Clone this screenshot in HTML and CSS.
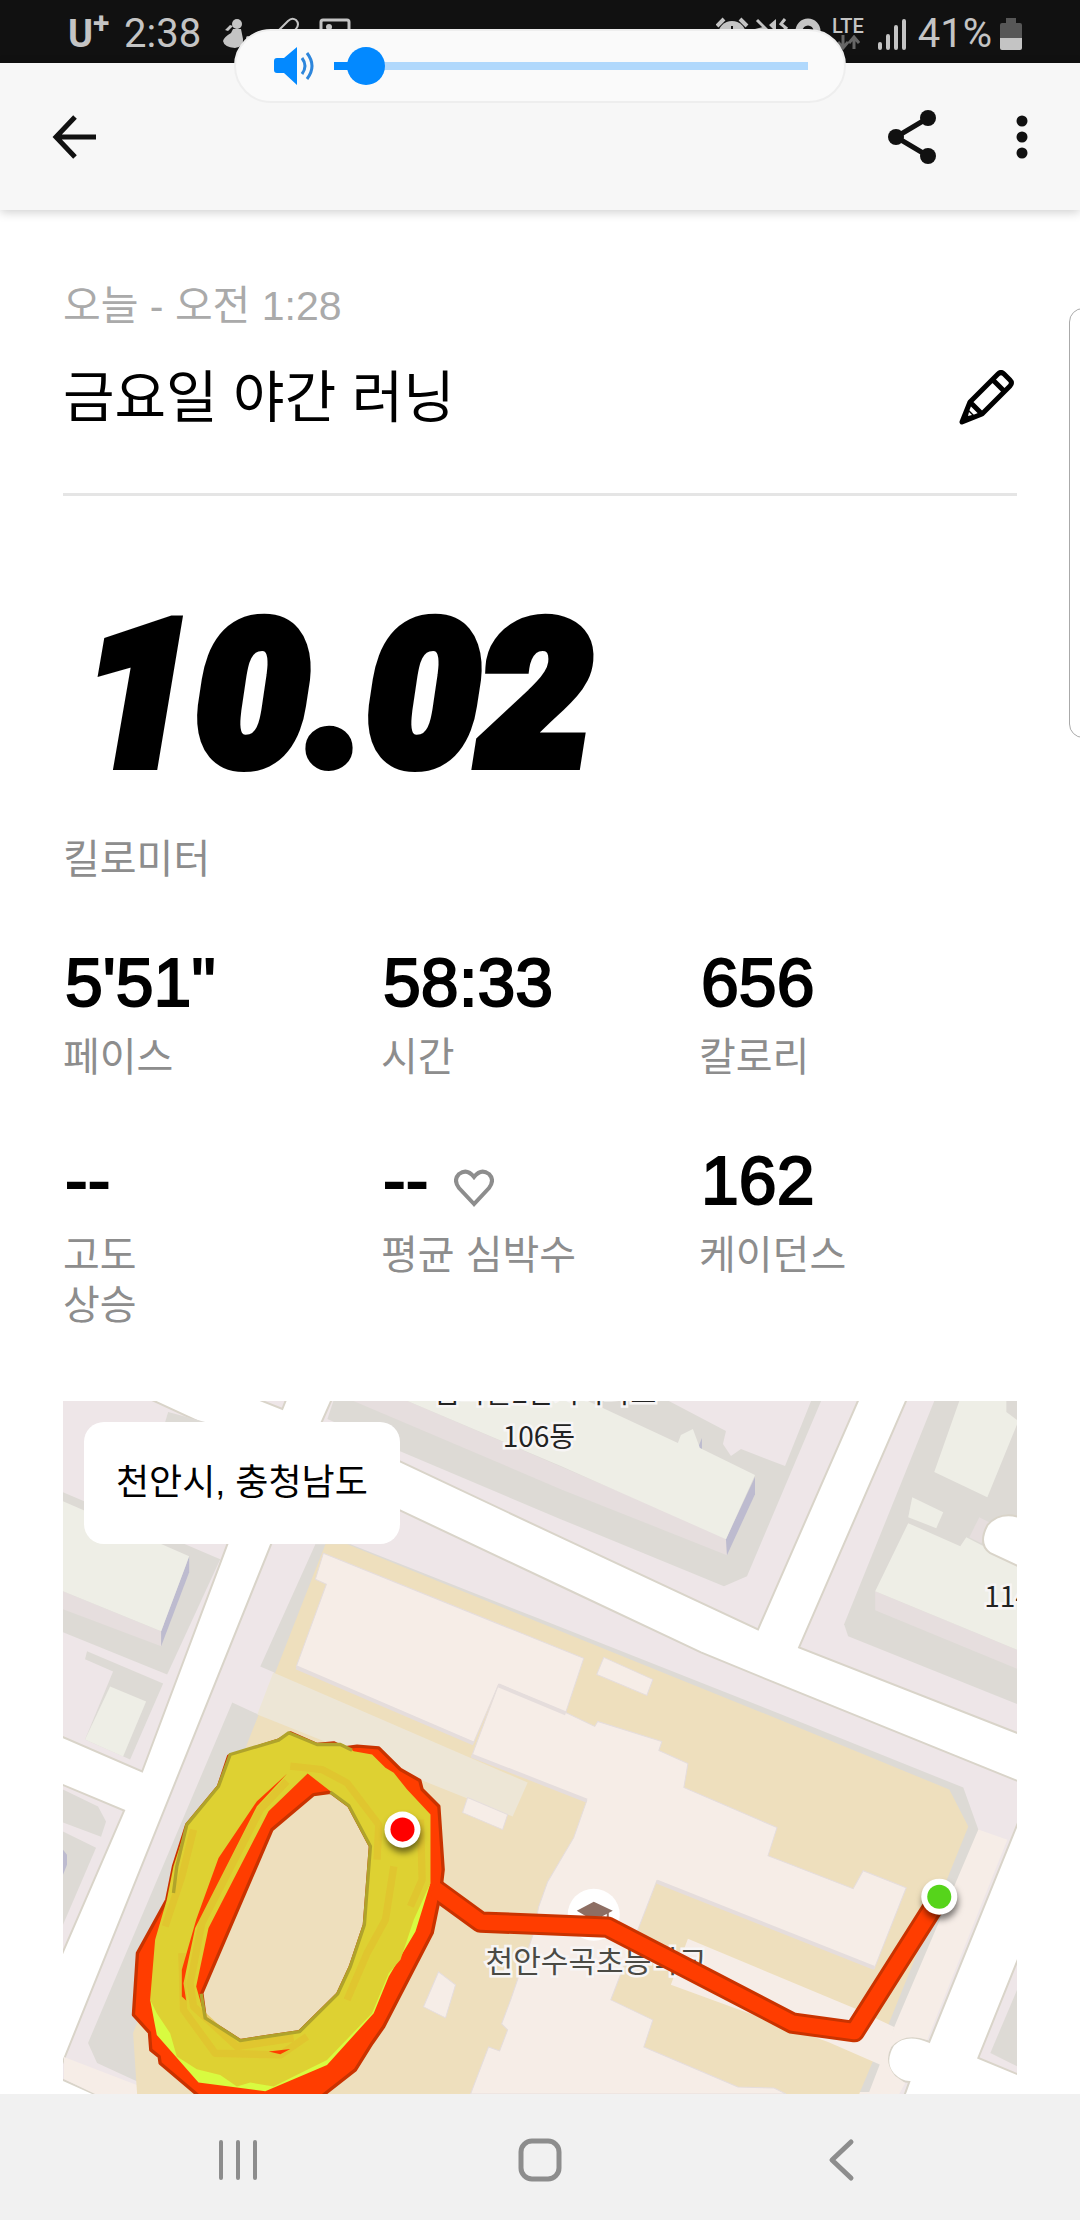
FILE: index.html
```html
<!DOCTYPE html>
<html lang="ko">
<head>
  <meta charset="UTF-8">
  <meta name="viewport" content="width=device-width, initial-scale=1.0">
  <title>금요일 야간 러닝</title>
  <link rel="stylesheet" href="styles.css">
</head>
<body>
  <div class="status-bar">
    <div class="status-group">
      <span class="carrier">U<sup>+</sup></span>
      <span class="clock">2:38</span>
      <svg class="notif-icons" viewBox="0 0 130 34" width="130" height="34" aria-hidden="true">
        <circle cx="15" cy="7" r="5" fill="#c4c4c4"/>
        <path d="M11 12h8l2 10q1 8-8 9Q2 30 1 24q1-4 8-8zM3 13l5-5 3 1-5 5z" fill="#c4c4c4"/>
        <circle cx="26" cy="21" r="2" fill="#c4c4c4"/>
        <path d="M55 15 66 4q4-4 8-1 4 4 0 9L60 26" fill="none" stroke="#c4c4c4" stroke-width="2"/>
        <rect x="99" y="3" width="28" height="26" rx="2" fill="none" stroke="#c4c4c4" stroke-width="3"/>
        <circle cx="107" cy="10" r="3" fill="#c4c4c4"/>
      </svg>
    </div>
    <div class="status-group">
      <svg class="system-icons" viewBox="0 0 108 34" width="108" height="34" aria-hidden="true">
        <path d="M1 9l7-7M31 9l-7-7" stroke="#c4c4c4" stroke-width="4"/>
        <circle cx="16" cy="18" r="14" fill="#c4c4c4"/>
        <path d="M16 9v9h6" fill="none" stroke="#111" stroke-width="2"/>
        <path d="M41 3l20 20" stroke="#c4c4c4" stroke-width="3"/>
        <path d="M53 8l7-6v13zM39 12l8-2 8 10H39z" fill="#c4c4c4"/>
        <path d="M69 2l-4 5 5 4-4 5" fill="none" stroke="#c4c4c4" stroke-width="3"/>
        <circle cx="92" cy="14" r="9" fill="none" stroke="#c4c4c4" stroke-width="7"/>
      </svg>
      <span class="network">LTE
        <svg viewBox="0 0 24 15" width="24" height="15" aria-hidden="true">
          <path d="M7 0v11M2 7l5 6 5-6M18 14V3M13 8l5-6 5 6" fill="none" stroke="#666" stroke-width="3"/>
        </svg>
      </span>
      <svg class="signal" viewBox="0 0 28 32" width="28" height="32" aria-hidden="true">
        <path d="M2 26v4M10 18v12M18 9v21M26 3v27" stroke="#c4c4c4" stroke-width="4" stroke-linecap="round"/>
      </svg>
      <span class="percent">41%</span>
      <svg class="battery" viewBox="0 0 22 34" width="22" height="34" aria-hidden="true">
        <path d="M6 1h10v5h4q2 0 2 2v14H0V8q0-2 2-2h4z" fill="#575757"/>
        <path d="M0 21h22v10q0 2-2 2H2q-2 0-2-2z" fill="#c4c4c4"/>
      </svg>
    </div>
  </div>

  <div class="volume-panel">
    <svg viewBox="0 0 40 38" width="40" height="38" aria-hidden="true">
      <path d="M3 11h7L23 0v38L10 26H3q-3 0-3-3v-9q0-3 3-3z" fill="#0389ff"/>
      <path d="M28 11q6 8 0 16M33 6q10 13 0 26" fill="none" stroke="#2d86dc" stroke-width="3"/>
    </svg>
    <input class="volume" type="range" min="0" max="100" value="3" aria-label="볼륨">
  </div>

  <header class="app-bar">
    <button class="icon-btn" aria-label="뒤로">
      <svg viewBox="0 0 44 44" width="44" height="44">
        <path d="M23 2 4 22l19 20M4 22h40" fill="none" stroke="#111" stroke-width="5"/>
      </svg>
    </button>
    <div class="app-actions">
      <button class="icon-btn" aria-label="공유">
        <svg viewBox="0 0 48 54" width="48" height="54">
          <path d="M40 8 8 27l32 19" fill="none" stroke="#111" stroke-width="5"/>
          <circle cx="40" cy="8" r="8" fill="#111"/>
          <circle cx="8" cy="27" r="8" fill="#111"/>
          <circle cx="40" cy="46" r="8" fill="#111"/>
        </svg>
      </button>
      <button class="icon-btn" aria-label="더보기">
        <svg viewBox="0 0 12 44" width="12" height="44">
          <circle cx="6" cy="6" r="5.5" fill="#111"/>
          <circle cx="6" cy="22" r="5.5" fill="#111"/>
          <circle cx="6" cy="38" r="5.5" fill="#111"/>
        </svg>
      </button>
    </div>
  </header>

  <main class="run">
    <p class="run-date">오늘 - 오전 1:28</p>
    <div class="run-title">
      <h1>금요일 야간 러닝</h1>
      <button class="icon-btn" aria-label="제목 수정">
        <svg viewBox="0 0 58 56" width="58" height="56">
          <path d="M3 52 11 32 39 4q3-3 6 0l6 6q3 3 0 6L23 44zM11 32l12 12M34 10l11 11" fill="none" stroke="#000" stroke-width="5" stroke-linejoin="round"/>
          <path d="M2 54 8 38l9 9z" fill="#000"/>
          <path d="M9 46l1-4 3 3z" fill="#fff"/>
        </svg>
      </button>
    </div>

    <div class="distance">10.02</div>
    <div class="label">킬로미터</div>

    <div class="stats">
      <div class="stat">
        <div class="value">5'51"</div>
        <div class="label">페이스</div>
      </div>
      <div class="stat">
        <div class="value">58:33</div>
        <div class="label">시간</div>
      </div>
      <div class="stat">
        <div class="value">656</div>
        <div class="label">칼로리</div>
      </div>
      <div class="stat">
        <div class="value">--</div>
        <div class="label">고도<br>상승</div>
      </div>
      <div class="stat">
        <div class="value">--
          <svg class="heart" viewBox="0 0 40 38" width="40" height="38" aria-hidden="true">
            <path d="M20 35 5 19Q-1 11 5 5q8-6 15 3 7-9 15-3 6 6 0 14z" fill="none" stroke="#8d8d8d" stroke-width="4"/>
          </svg>
        </div>
        <div class="label">평균 심박수</div>
      </div>
      <div class="stat">
        <div class="value">162</div>
        <div class="label">케이던스</div>
      </div>
    </div>

    <div class="map">
      <svg class="map-canvas" viewBox="63 1402 954 692" preserveAspectRatio="xMinYMin slice" role="img" aria-label="러닝 경로 지도">
        <rect x="63" y="1402" width="954" height="692" fill="#fff"/>

        <!-- city blocks -->
        <g class="block">
          <path d="M50 1390H128L262 1452 142 1772 50 1732z"/>
          <path d="M232 1390 282 1410 290 1390z"/>
          <path d="M336 1390 320 1426 399 1462 560 1538 757 1630 862 1390z"/>
          <path d="M910 1390 798 1648 1030 1739V1390z"/>
          <path d="M50 1780 124 1811 50 1982z"/>
          <path d="M303 1465 399 1511 560 1587 700 1653 773 1683 1030 1787V1790L928 2042Q905 2032 892 2045 882 2062 892 2074 900 2082 908 2082L898 2110H130L50 2074V2094z"/>
          <path d="M1030 1926 977 2058 1030 2080z"/>
        </g>

        <!-- apartments -->
        <g class="ground">
          <path d="M63 1493 220 1560 167 1675 63 1633z"/>
          <path d="M168 1413 205 1423 205 1440 160 1440z"/>
          <path d="M87 1652 163 1684 130 1760 121 1756 85 1740 113 1672 85 1660z"/>
          <path d="M63 1790 98 1807 106 1822 101 1837 63 1823z"/>
          <path d="M63 1832 96 1848 63 1925z"/>
          <path d="M333 1402 327 1420 399 1452 560 1520 723 1587 746 1577 820 1402H810L784 1467 740 1450 730 1457 722 1445 725 1432 668 1402z"/>
          <path d="M933 1402 843 1625 847 1637 1017 1705V1402z"/>
          <path d="M1017 1987 989 2053 1017 2067z"/>
        </g>
        <g class="wall">
          <path d="M63 1592 161 1632V1647L63 1610z"/>
          <path d="M353 1402 560 1490 726 1556 725 1538 407 1402z"/>
          <path d="M874 1592 1017 1651V1670L874 1611z"/>
          <path d="M978 1518 968 1538 980 1544 990 1524z"/>
        </g>
        <g class="shade">
          <path d="M189 1557V1573L161 1647V1632z"/>
          <path d="M725 1540 754 1478V1495L726 1556z"/>
          <path d="M63 1850 67 1855V1865L63 1875z"/>
          <path d="M701 1439 697 1449 701 1450z"/>
        </g>
        <g class="roof">
          <path d="M63 1502 189 1557 161 1632 63 1592z"/>
          <path d="M110 1687 146 1702 123 1757 85 1740z"/>
          <path d="M407 1402 560 1467 725 1540 754 1476 699 1449 692 1430 680 1436 677 1444 587 1402z"/>
          <path d="M958 1402 933 1473 986 1498 1017 1422 1005 1413V1402z"/>
          <path d="M911 1498 942 1513 935 1529 907 1518z"/>
          <path d="M907 1524 959 1547 965 1538 1017 1565V1651L874 1592z"/>
        </g>
        <path d="M1030 1523Q1002 1508 986 1526 976 1545 989 1554L1030 1573z" fill="#fff" stroke="#d9d4c9" stroke-width="2"/>

        <!-- school ground -->
        <path d="M977 1830 1006 1840 926 2040Q903 2032 890 2047 882 2062 894 2076L904 2083 898 2094H850L860 2040z" fill="#f6ede7"/>
        <path d="M64 2057 160 2094H95L64 2079z" fill="#f6ede7"/>
        <path d="M315 1545 260 1667 274 1673 258 1715 232 1703 88 2043 97 2063 160 2092H868L893 2027 977 1830 962 1788 793 1720 540 1620 350 1545z" fill="#dddad5"/>
        <path d="M325 1545 275 1673 133 2033 137 2094H858L887 2025 967 1827 948 1790 778 1720 560 1632 347 1545z" fill="#eedfbd"/>
        <path d="M273 1673 527 1783 512 1817 257 1715z" fill="#ede6d6"/>
        <path d="M687 1939 855 2009 893 2027 882 2066 827 2042 670 1985z" fill="#f6ede7"/>
        <g class="school">
          <path d="M323 1554 583 1659 565 1713 498 1685 473 1743 296 1667 326 1585 315 1580z"/>
          <path d="M603 1658 652 1680 646 1696 596 1675z"/>
          <path d="M498 1685 565 1713 594 1727 597 1722 661 1742 658 1751 687 1764 683 1788 776 1828 767 1856 852 1889 862 1871 905 1888 873 1969 656 1881 610 2000 652 2020 643 2047 737 2087 773 2088 785 2094H470L488 2047 499 2051 507 2030 501 2024 510 2000 533 1933 538 1907 547 1882 573 1838 586 1801 471 1757z"/>
          <path d="M467 1798 507 1815 502 1830 462 1813z"/>
          <path d="M438 1972 455 1985 445 2018 423 2007z"/>
        </g>
        <path d="M296 1668 473 1744M498 1686 565 1714M471 1756 586 1801M656 1882 873 1968" fill="none" stroke="#e5dddc" stroke-width="4"/>

        <!-- place names -->
        <circle cx="593" cy="1915" r="26" fill="#fff"/>
        <path d="M576 1911 593 1902 612 1911 593 1921zM583 1917v8h21v-8z" fill="#8d6e63"/>
        <path d="M607 1912v12" stroke="#8d6e63" stroke-width="2"/>
        <g class="map-text">
          <text x="434" y="1404">꿈마을2단지아파트</text>
          <text x="502" y="1448">106동</text>
          <text x="983" y="1608">114동</text>
          <text class="place" x="485" y="1972">천안수곡초등학교</text>
        </g>

        <!-- run route -->
        <g transform="translate(60 1720) scale(.3333)" stroke-linejoin="round">
          <path d="M1120 505 1260 607 1640 622 2195 910 2380 935 2630 540" fill="none" stroke="#c93300" stroke-width="64"/>
          <path d="M690 40 770 75 820 70 850 85 890 80 955 85 1020 150 1078 183 1085 210 1135 260 1148 450 1140 520 1115 640 970 920 935 970 885 1050 770 1140H430L300 1030 297 1010 272 990 268 938 220 885 232 700 320 540 340 440 380 315 475 200 505 110 655 62zM760 225 635 330 425 820 435 895 540 962 718 935 832 822 870 740 912 615 930 380 865 258 810 218z" fill="#ff3d00" stroke="#c93300" stroke-width="10" fill-rule="evenodd"/>
          <path d="M1120 505 1260 607 1640 622 2195 910 2380 935 2630 540" fill="none" stroke="#ff3d00" stroke-width="46"/>
          <path d="M270 840 290 945 415 1088 615 1114 800 1035 940 880 985 770 1065 635 1110 490 900 800 600 1060z" fill="#d8fb40"/>
          <path d="M690 40 770 75 850 75 880 95 935 105 975 145 1000 160 1040 210 1110 285 1110 490 1060 600 1020 720 985 760 935 880 800 1020 700 1070 640 1100 570 1088 530 1100 480 1065 410 1048 350 1010 330 940 290 880 270 840 285 660 320 540 340 440 380 315 475 200 510 105 655 62zM742 162 625 275 445 625 408 800 435 895 540 962 718 935 832 822 870 740 912 615 930 380 865 258z" fill="#ded132" fill-rule="evenodd"/>
          <g fill="none" stroke="#e2bf2e" stroke-width="22" opacity=".6">
            <path d="M690 140 785 150 860 190 955 315 950 420"/>
            <path d="M1080 300 1085 480 1050 560"/>
            <path d="M680 185 600 270 425 610 390 790 400 860 530 980 700 955"/>
            <path d="M400 330 365 470 315 620M365 700 370 870 465 1000 660 1005 740 950"/>
            <path d="M1000 440 975 600 920 700 860 840"/>
          </g>
          <path d="M680 163 590 245 475 415 408 600 365 750 365 830 378 842 370 790 405 625 590 260zM625 995 660 1003 690 987z" fill="#ff3d00"/>
          <path d="M340 520 350 440 380 315 475 200 510 105 655 62 685 40 770 75 840 75 875 92M810 218 865 258 930 380 912 615 870 740 832 822 718 935 540 962 435 895 423 822" fill="none" stroke="#b0a32b" stroke-width="10"/>
        </g>

        <g class="pin">
          <circle cx="402" cy="1830" r="18" fill="#fff"/>
          <circle cx="402" cy="1830" r="12" fill="#f00"/>
        </g>
        <g class="pin">
          <circle cx="938" cy="1897" r="18" fill="#fff"/>
          <circle cx="938" cy="1897" r="12" fill="#56d41b"/>
        </g>
      </svg>
      <div class="location">천안시, 충청남도</div>
    </div>
  </main>

  <div class="edge-handle"></div>

  <nav class="nav-bar">
    <button class="icon-btn" aria-label="최근 앱">
      <svg viewBox="0 0 44 44" width="44" height="44">
        <path d="M4 4v36M21 4v36M38 4v36" stroke="#8d8d8d" stroke-width="4" stroke-linecap="round"/>
      </svg>
    </button>
    <button class="icon-btn" aria-label="홈">
      <svg viewBox="0 0 44 44" width="44" height="44">
        <rect x="3" y="3" width="38" height="38" rx="11" fill="none" stroke="#8d8d8d" stroke-width="5"/>
      </svg>
    </button>
    <button class="icon-btn" aria-label="뒤로 가기">
      <svg viewBox="0 0 44 44" width="44" height="44">
        <path d="M32 4 13 22l19 18" fill="none" stroke="#8d8d8d" stroke-width="5" stroke-linecap="round" stroke-linejoin="round"/>
      </svg>
    </button>
  </nav>
</body>
</html>
```
FILE: styles.css
```css
:root {
  --text: #000;
  --muted: #8d8d8d;
  --light: #aaa;
  --line: #e5e5e5;
  --accent: #0389ff;
  --gutter: 63px;
}

* {
  box-sizing: border-box;
}

body {
  margin: 0;
  height: 100vh;
  display: flex;
  flex-direction: column;
  overflow: hidden;
  position: relative;
  background: #fff;
  color: var(--text);
  font-family: "Liberation Sans", "Noto Sans CJK KR", sans-serif;
}

h1, p {
  margin: 0;
  font-weight: normal;
}

svg {
  display: block;
  flex: none;
}

.icon-btn {
  display: flex;
  padding: 0;
  border: 0;
  background: none;
  cursor: pointer;
}

/* status bar */
.status-bar {
  flex: none;
  height: 63px;
  padding: 4px 58px 0 68px;
  display: flex;
  justify-content: space-between;
  align-items: center;
  background: #111;
  color: #c4c4c4;
  font-family: Roboto, sans-serif;
  font-size: 40px;
}

.status-group {
  display: flex;
  align-items: center;
}

.carrier {
  width: 56px;
  font-size: 38px;
  font-weight: 700;
  line-height: 48px;
}

.carrier sup {
  font-size: 30px;
  line-height: 0;
}

.clock {
  width: 98px;
}

.network {
  margin: 0 14px 0 8px;
  font-size: 20px;
  font-weight: 500;
  line-height: 18px;
}

.network svg {
  margin-left: 4px;
}

.signal {
  margin-right: 12px;
}

.percent {
  margin-right: 8px;
}

/* volume overlay */
.volume-panel {
  position: absolute;
  top: 29px;
  left: 50%;
  transform: translateX(-50%);
  width: 612px;
  height: 74px;
  padding: 0 36px 0 38px;
  display: flex;
  align-items: center;
  gap: 20px;
  background: #fafafa;
  border: 2px solid #eee;
  border-radius: 37px;
}

.volume {
  flex: 1;
  min-width: 0;
  margin: 0;
  height: 40px;
  appearance: none;
  background: linear-gradient(to right, var(--accent) 24px, #b0d8fc 24px) center / 100% 8px no-repeat;
  border-radius: 4px;
}

.volume::-webkit-slider-thumb {
  appearance: none;
  width: 38px;
  height: 38px;
  border-radius: 50%;
  background: var(--accent);
}

/* app bar */
.app-bar {
  flex: none;
  height: 147px;
  padding: 0 52px;
  display: flex;
  justify-content: space-between;
  align-items: center;
  background: #f7f7f7;
  box-shadow: 0 2px 10px rgba(0, 0, 0, 0.2);
}

.app-actions {
  display: flex;
  align-items: center;
  gap: 80px;
}

/* run summary */
.run {
  flex: 1;
  min-height: 0;
  padding: 68px var(--gutter) 0;
  display: flex;
  flex-direction: column;
}

.run-date {
  color: var(--light);
  font-size: 41px;
  line-height: 56px;
}

.run-title {
  display: flex;
  justify-content: space-between;
  align-items: center;
  margin-top: 22px;
  padding-bottom: 53px;
  border-bottom: 3px solid var(--line);
}

.run-title h1 {
  font-size: 56px;
  line-height: 84px;
}

.distance {
  margin: 90px 0 28px;
  padding-left: 20px;
  font-family: Roboto, sans-serif;
  font-size: 200px;
  font-weight: 900;
  font-style: italic;
  line-height: 220px;
  -webkit-text-stroke: 12px var(--text);
}

.label {
  color: var(--muted);
  font-size: 40px;
  line-height: 50px;
}

.stats {
  display: grid;
  grid-template-columns: repeat(3, 1fr);
  row-gap: 48px;
  margin-top: 48px;
}

.value {
  display: flex;
  align-items: center;
  gap: 26px;
  padding-left: 2px;
  font-size: 68px;
  line-height: 100px;
  -webkit-text-stroke: 2px var(--text);
}

.heart {
  margin-top: 16px;
}

/* map */
.map {
  position: relative;
  flex: 1;
  min-height: 0;
  margin-top: 71px;
  overflow: hidden;
}

.map-canvas {
  width: 100%;
  height: 100%;
}

.block {
  fill: #eee6e8;
  stroke: #d9d4c9;
  stroke-width: 2;
}

.ground {
  fill: #dddad5;
}

.wall {
  fill: #e6dede;
}

.shade {
  fill: #bdbbcf;
}

.roof {
  fill: #eeeee6;
}

.school {
  fill: #f6ede7;
  stroke: #e5dddc;
  stroke-width: 1;
}

.map-text {
  font-family: "Noto Sans CJK KR", sans-serif;
  font-size: 28px;
  fill: #222;
  stroke: #f7f5f5;
  stroke-width: 5px;
  paint-order: stroke;
}

.map-text .place {
  font-size: 30px;
  fill: #4a4a44;
}

.pin {
  filter: drop-shadow(1px 5px 3px rgba(0, 0, 0, 0.5));
}

.location {
  position: absolute;
  top: 21px;
  left: 21px;
  padding: 34px 32px;
  border-radius: 20px;
  background: #fff;
  font-size: 36px;
  line-height: 54px;
}

/* edge panel handle */
.edge-handle {
  position: absolute;
  top: 308px;
  right: -4px;
  width: 15px;
  height: 430px;
  border: 1px solid #aaa;
  border-radius: 14px 0 0 14px;
  background: #fff;
}

/* system navigation */
.nav-bar {
  flex: none;
  height: 126px;
  padding: 6px 217px 0;
  display: flex;
  justify-content: space-between;
  align-items: center;
  background: #f1f1f1;
}
```
